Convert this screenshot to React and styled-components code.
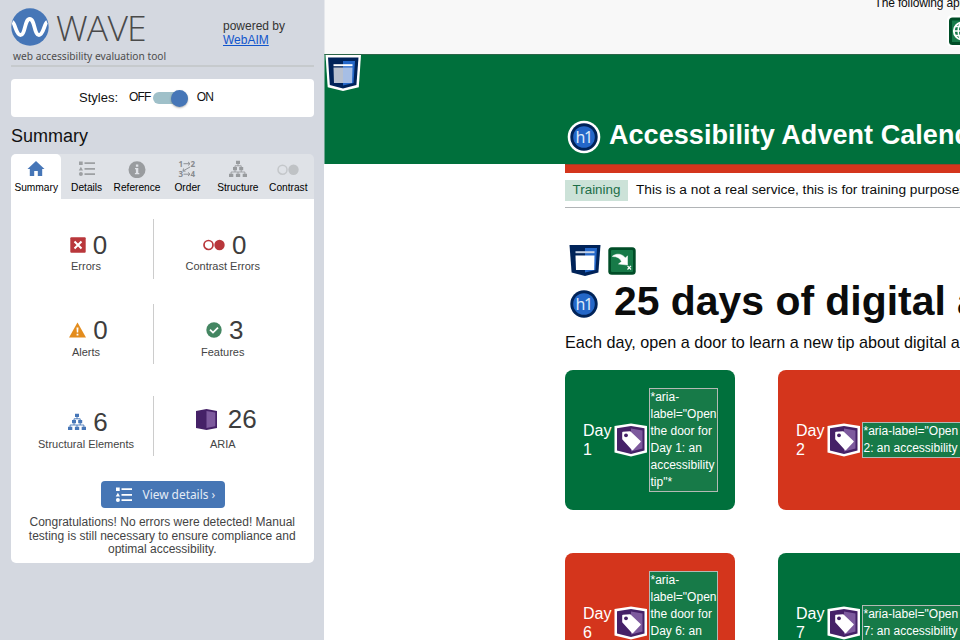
import React from "react";
import styled, { createGlobalStyle } from "styled-components";

const GlobalStyle = createGlobalStyle`
  * { box-sizing: border-box; }
  html, body { margin: 0; padding: 0; overflow: hidden; }
  body { font-family: "Liberation Sans", Arial, sans-serif; background: #fff; color: #0b0c0c; }
  h1, h2, p { margin: 0; font-weight: normal; }
  svg { display: block; flex: none; }
`;

const Page = styled.div`
  display: flex;
  width: 960px;
  height: 640px;
  overflow: hidden;
`;

/* ---------- Sidebar ---------- */
const Sidebar = styled.aside`
  flex: none;
  width: 324px;
  height: 640px;
  padding: 8px 0 0 11px;
  background: #d4d8e0;
`;
const Brand = styled.header`
  display: flex;
  height: 59px;
  border-bottom: 2px solid #c6cacd;
  width: 302.5px;
`;
const BrandLeft = styled.div`
  width: 212px;
`;
const LogoRow = styled.div`
  display: flex;
  height: 38px;
`;
const Wordmark = styled.span`
  margin: -1px 0 0 7px;
  font: 300 35.5px/40px "Open Sans", "Noto Sans", sans-serif;
  letter-spacing: -0.8px;
  color: #4a4a4a;
  white-space: nowrap;
`;
const Tagline = styled.div`
  margin: 3px 0 0 2px;
  font: 10.2px/15px "Noto Sans", sans-serif;
  color: #4c4c4c;
  white-space: nowrap;
`;
const Powered = styled.div`
  padding-top: 12px;
  font-size: 12px;
  line-height: 13.7px;
  color: #333;
  white-space: nowrap;
`;
const Link = styled.a`
  display: block;
  color: #1155cc;
  text-decoration: underline;
`;
const StylesPanel = styled.section`
  display: flex;
  align-items: center;
  width: 302.5px;
  height: 38px;
  margin-top: 12px;
  padding: 0 0 2px 68px;
  background: #fff;
  border-radius: 4px;
  color: #111;
  font-size: 13px;
`;
const SwitchLabel = styled.span`
  font-size: 12px;
  letter-spacing: -0.8px;
  margin-left: ${(p) => p.$gap}px;
`;
const Track = styled.span`
  display: flex;
  align-items: center;
  justify-content: flex-end;
  width: 35px;
  height: 12px;
  margin: 2px 0 0 2.5px;
  border-radius: 6px;
  background: #9fc0c9;
`;
const Knob = styled.span`
  flex: none;
  width: 17px;
  height: 17px;
  border-radius: 50%;
  background: #4676b7;
  box-shadow: 0 1px 2px rgba(0, 0, 0, 0.3);
`;
const PanelTitle = styled.h2`
  margin-top: 7px;
  font-size: 18px;
  line-height: 24px;
  height: 30px;
  color: #111;
`;
const Tabs = styled.nav`
  display: grid;
  grid-template-columns: repeat(6, 1fr);
  width: 302.5px;
  height: 45px;
  background: #dfe2e7;
  border-radius: 5px 5px 0 0;
`;
const Tab = styled.div`
  display: flex;
  flex-direction: column;
  align-items: center;
  padding-top: 6px;
  border-radius: 5px 5px 0 0;
  background: ${(p) => (p.$active ? "#fff" : "transparent")};
  font-size: 10.2px;
  line-height: 12px;
  color: #000;
  white-space: nowrap;
  svg { margin-bottom: 4px; }
`;
const Results = styled.section`
  width: 302.5px;
  height: 364px;
  padding-top: 20px;
  background: #fff;
  border-radius: 0 0 5px 5px;
`;
const ResultRow = styled.div`
  display: grid;
  grid-template-columns: 143px 159.5px;
  height: 60px;
  margin-bottom: ${(p) => p.$after}px;
`;
const Stat = styled.div`
  padding-top: ${(p) => p.$top}px;
  padding-left: ${(p) => p.$indent || 0}px;
  padding-right: ${(p) => p.$outdent || 0}px;
  border-right: ${(p) => (p.$divided ? "1px solid #ccc" : "0")};
`;
const StatValue = styled.div`
  display: flex;
  align-items: center;
  justify-content: center;
  gap: ${(p) => p.$gap}px;
  height: 28px;
  margin-bottom: ${(p) => p.$after}px;
  padding-left: ${(p) => p.$shift}px;
  font-size: 26px;
  line-height: 28px;
  color: #3d3d3d;
`;
const StatLabel = styled.div`
  text-align: center;
  font-size: 11px;
  line-height: 14px;
  color: #444;
  white-space: nowrap;
`;
const DetailsButton = styled.button`
  display: flex;
  align-items: center;
  gap: 10px;
  width: 124px;
  height: 27px;
  margin: 25px 0 0 90px;
  padding: 0 0 0 13.5px;
  border: 0;
  border-radius: 4px;
  background: #4676b5;
  color: #e4ecf6;
  font: 11.9px/20px "Noto Sans", sans-serif;
  white-space: nowrap;
`;
const ButtonText = styled.span`
  margin-top: -1px;
`;
const Message = styled.p`
  margin-top: 8px;
  text-align: center;
  font-size: 12px;
  line-height: 13.7px;
  color: #444;
`;
const MessageLine = styled.span`
  display: block;
  white-space: nowrap;
`;

/* ---------- Evaluated page ---------- */
const Main = styled.main`
  flex: none;
  width: 636px;
  height: 640px;
  overflow: hidden;
  background: #fff;
`;
const Notice = styled.div`
  height: 54px;
  background: #f8f8f8;
  border-left: 1px solid #e6e8ec;
  overflow: hidden;
`;
const NoticeText = styled.p`
  margin: -4px 0 0 549.5px;
  font-size: 12px;
  line-height: 14px;
  height: 14px;
  letter-spacing: -0.15px;
  white-space: nowrap;
`;
const NoticeIcon = styled.div`
  margin: 5px 0 0 622px;
  width: 32px;
`;
const Banner = styled.header`
  display: flex;
  height: 110px;
  background: #00703c;
  border-top: 1px solid #2b6548;
  border-left: 1px solid #6ba58f;
`;
const BannerMarker = styled.div`
  width: 36px;
`;
const BannerTitle = styled.h1`
  display: flex;
  align-items: center;
  gap: 8px;
  margin: 64px 0 0 206px;
  height: 36px;
  font-size: 27px;
  font-weight: bold;
  line-height: 32px;
  letter-spacing: 0.05px;
  color: #fff;
  white-space: nowrap;
`;
const TitleText = styled.span`
  margin-top: -4px;
`;
const Content = styled.div`
  margin-left: 241px;
  width: 640px;
`;
const RedBar = styled.div`
  height: 9px;
  background: #d4351c;
  border-top: 1px solid #9b4026;
`;
const Phase = styled.div`
  display: flex;
  align-items: center;
  height: 35px;
  border-bottom: 1px solid #b1b4b6;
  font-size: 13.7px;
  white-space: nowrap;
`;
const PhaseText = styled.span`
  margin-top: -1px;
`;
const Tag = styled.strong`
  width: 63px;
  height: 21px;
  margin-right: 8px;
  background: #cce2d8;
  color: #1c6e48;
  font-weight: normal;
  font-size: 13.4px;
  line-height: 20px;
  text-align: center;
`;
const MarkerRow = styled.div`
  display: flex;
  gap: 5.5px;
  margin: 34px 0 0 1.5px;
  height: 35px;
`;
const SkipMarker = styled.div`
  padding-top: 5px;
`;
const Heading = styled.h1`
  display: flex;
  align-items: center;
  gap: 15px;
  height: 50px;
  padding-left: 4px;
  font-size: 40.9px;
  font-weight: bold;
  line-height: 50px;
  white-space: nowrap;
  svg { margin-top: 4px; }
`;
const HeadingText = styled.span`
  margin-top: -3px;
`;
const Lead = styled.p`
  margin-top: 5px;
  height: 38px;
  font-size: 16.2px;
  line-height: 20px;
  white-space: nowrap;
`;
const Doors = styled.div`
  display: grid;
  grid-template-columns: 170px 383px;
  grid-auto-rows: 140px;
  gap: 43px;
`;
const Door = styled.article`
  display: flex;
  align-items: center;
  padding: 0 18px;
  border-radius: 8px;
  background: ${(p) => (p.$tone === "green" ? "#00703c" : "#d4351c")};
  color: #fff;
`;
const DayName = styled.div`
  flex: none;
  width: 30px;
  margin-right: 1px;
  font-size: 16px;
  line-height: 19px;
`;
const AriaNote = styled.div`
  flex: none;
  width: ${(p) => p.$width}px;
  margin-left: 1px;
  padding-left: 0.5px;
  border: 1px solid #b3b9b4;
  background: #177a48;
  font-size: 12px;
  line-height: 17px;
`;

/* ---------- Icons ---------- */
const WaveLogo = () => (
  <svg width="38" height="38" viewBox="0 0 38 38">
    <circle cx="19" cy="19" r="18.7" fill="#4676b7" />
    <path d="M1.500 14C4 15 5 27 9.500 27C14.500 27 13.500 11 18.700 11C24 11 23 27 28 27C32.500 27 33.500 15 36 14" fill="none" stroke="#fff" strokeWidth="3.8" />
  </svg>
);
const HomeIcon = () => (
  <svg width="18" height="18" viewBox="0 0 18 18">
    <path d="M9 1L17.500 9H15.200V16H10.800V11H7.200V16H2.800V9H.5Z" fill="#4676b7" />
  </svg>
);
const ListIcon = ({ color = "#9da0a3" }) => (
  <svg width="18" height="18" viewBox="0 0 18 18" fill={color}>
    <path d="M1 1.500h3.700v3.500H1zM2.900 6.700L5 10.600H.7z" />
    <circle cx="2.900" cy="14" r="2" />
    <path d="M6.500 2.300H17v1.800H6.500zM6.500 7.900H17v1.800H6.500zM6.500 13.300H17v1.800H6.500z" />
  </svg>
);
const InfoIcon = () => (
  <svg width="18" height="18" viewBox="0 0 18 18">
    <circle cx="9" cy="9.700" r="8.500" fill="#999c9f" />
    <path d="M7.900 4.600h2.400v2.200H7.900zM7 8h3.300v5h1v1.300H6.900v-1.300h1V9.200H7z" fill="#dfe2e7" />
  </svg>
);
const OrderText = styled.text`
  font: bold 8px "Noto Sans", sans-serif;
`;
const OrderIcon = () => (
  <svg width="22" height="18" viewBox="-2 0 22 18" fill="#888b8f">
    <OrderText x="0.500" y="6.500">1</OrderText>
    <OrderText x="12.500" y="6.500">2</OrderText>
    <OrderText x="0.500" y="17">3</OrderText>
    <OrderText x="12.500" y="17">4</OrderText>
    <path d="M5.500 3.700H12M10 1.900L12 3.700L10 5.500M5.500 14.200H12M10 12.400L12 14.200L10 16M12 7L5 11M5.500 8.500L5 11L7.500 11.200" fill="none" stroke="#8f9296" strokeWidth="1" />
  </svg>
);
const TreeIcon = ({ color = "#989b9e" }) => (
  <svg width="18" height="18" viewBox="0 0 18 18" fill={color}>
    <path d="M7 .8h4v3.200H7zM4 7.100h4v3.200H4zM10.200 7.100h4v3.200h-4zM0 13.800h4.300v3.200H0zM6.900 13.800h4.300v3.200H6.900zM13.700 13.800H18v3.200h-4.300z" />
    <path d="M9 4v2M6 8V5.800h6.200V8M6 10v2M12.200 10v2M2.100 14v-2h13.800v2M9 12v2" fill="none" stroke={color} strokeWidth=".9" />
  </svg>
);
const ContrastTabIcon = () => (
  <svg width="22" height="18" viewBox="0 0 22 18">
    <circle cx="5.500" cy="9.700" r="4.500" fill="none" stroke="#c4c7ca" strokeWidth="1.500" />
    <circle cx="16.500" cy="9.700" r="5.200" fill="#bfc2c5" />
  </svg>
);
const ErrorIcon = () => (
  <svg width="16" height="16" viewBox="0 0 16 16">
    <rect x=".3" y=".3" width="15.400" height="15.400" rx="1" fill="#b9373b" />
    <path d="M4.500 4.500L11.500 11.500M11.500 4.500L4.500 11.500" stroke="#fff" strokeWidth="2" />
  </svg>
);
const ContrastErrorIcon = () => (
  <svg width="22" height="12" viewBox="0 0 22 12">
    <circle cx="5.500" cy="6" r="4.500" fill="none" stroke="#b9373b" strokeWidth="1.700" />
    <circle cx="16.500" cy="6" r="5.200" fill="#b9373b" />
  </svg>
);
const AlertIcon = () => (
  <svg width="17" height="16" viewBox="0 0 17 16">
    <path d="M8.500 .5L17 15.500H0Z" fill="#e38c1d" />
    <path d="M7.500 5.500h2l-.3 5h-1.400zM7.600 11.800h1.800v1.800H7.600z" fill="#fff" />
  </svg>
);
const FeatureIcon = () => (
  <svg width="16" height="16" viewBox="0 0 16 16">
    <circle cx="8" cy="8" r="7.700" fill="#448662" />
    <path d="M4 7.700L7 10.600L12 5.600" fill="none" stroke="#fff" strokeWidth="1.800" />
  </svg>
);
const AriaIcon = () => (
  <svg width="21" height="21" viewBox="0 0 21 21">
    <path d="M0 2L10.500 0L21 2V19L10.500 21L0 19Z" fill="#452167" />
    <path d="M10.500 2L19.300 3.500V17.300L10.500 19Z" fill="#7d5a9d" />
  </svg>
);
const RegionIcon = ({ outlined }) => (
  <svg width="36" height="37" viewBox="0 0 36 37">
    {outlined && <path d="M.5 0H36L33.800 32.200L18 36L2.700 32.200Z" fill="#fff" />}
    <path d={outlined ? "M3 2.500H33.500L31.400 30L18 33.500L4.800 30Z" : "M2.500 3H33.500L31.400 30.600L18 34L4.600 30.600Z"} fill="#002359" />
    <path d="M18 6H30L28.500 28L18 30.500Z" fill="#2467c8" />
    <path d="M8.500 9.200H27.500V11.200H8.500Z" fill={outlined ? "#fff" : "#c6d2e6"} />
    <path d={outlined ? "M8.500 12.500H18V28H9Z" : "M8.500 13.500H27.500L27.200 28H9Z"} fill={outlined ? "#b8c0ce" : "#fff"} />
    {outlined && <path d="M18 12.500H27.500L27 28H18Z" fill="#a6bee5" />}
  </svg>
);
const H1Text = styled.text`
  font: 16px "Noto Sans", sans-serif;
  letter-spacing: -1.3px;
`;
const H1Icon = ({ size, outlined }) => (
  <svg width={size} height={size} viewBox={`${-size / 2} ${-size / 2} ${size} ${size}`}>
    {outlined && <circle r="16.300" fill="#fff" />}
    <circle r="13.700" fill="#002359" />
    <circle r="10.800" fill="#2467c8" />
    <H1Text x="-8.500" y="5.500" fill="#dce8f8">h1</H1Text>
  </svg>
);
const SkipIcon = () => (
  <svg width="28" height="28" viewBox="0 0 28 28">
    <rect x=".3" y=".3" width="27.400" height="27.400" rx="3.500" fill="#004d27" />
    <rect x="3" y="3" width="22" height="22" rx="1" fill="#177a48" />
    <path d="M4.500 9C9 5.800 14.500 7 17.500 11L19.500 8.800V18L10.500 17L13.500 14.500C12 11 9 9.500 4.500 9.500Z" fill="#fff" stroke="#fff" strokeWidth=".5" />
    <path d="M19.500 18.800L23 22.500M23 18.800L19.500 22.500" stroke="#fff" strokeWidth="1.200" />
  </svg>
);
const LangIcon = () => (
  <svg width="32" height="32" viewBox="0 0 32 32">
    <rect width="32" height="32" rx="5" fill="#fff" />
    <rect x="2" y="2.500" width="27.500" height="27.500" rx="3.500" fill="#004d27" />
    <rect x="5" y="5.500" width="21.500" height="21.500" fill="#177a48" />
    <circle cx="15.500" cy="16" r="8.700" fill="none" stroke="#fff" strokeWidth="1.900" />
    <path d="M7 16H24.500M9 11.500H22M9 20.500H22M15.500 7.500V24.500" stroke="#fff" strokeWidth="1.500" />
    <ellipse cx="15.500" cy="16" rx="4.300" ry="8.500" fill="none" stroke="#fff" strokeWidth="1.500" />
  </svg>
);
const AriaTagIcon = () => (
  <svg width="34" height="34" viewBox="0 0 34 34">
    <path d="M.5 3L17 .5L33 3V29.500L17 33.500L.5 29.500Z" fill="#fff" />
    <path d="M3 5.300L17 3L30.500 5.300V27.500L17 31L3 27.500Z" fill="#452167" />
    <path d="M17 5.500L28.500 7.500V25.500L17 28.500Z" fill="#7d5a9d" />
    <path d="M9 9.500L16 9L26 18.500L18.500 26.500L9 16Z" fill="#fff" stroke="#fff" strokeWidth="1.600" strokeLinejoin="round" />
    <circle cx="12" cy="12.300" r="1.900" fill="#452167" />
  </svg>
);

const tabs = [
  ["Summary", <HomeIcon />],
  ["Details", <ListIcon />],
  ["Reference", <InfoIcon />],
  ["Order", <OrderIcon />],
  ["Structure", <TreeIcon />],
  ["Contrast", <ContrastTabIcon />],
];
const doors = [
  { day: 1, tone: "green", width: 68.5 },
  { day: 2, tone: "red", width: 194 },
  { day: 6, tone: "red", width: 68.5 },
  { day: 7, tone: "green", width: 194 },
];

function Result({ icon, value, label, gap = 7, after = 0, shift = 5, ...layout }) {
  return (
    <Stat {...layout}>
      <StatValue $gap={gap} $after={after} $shift={shift}>{icon}<span>{value}</span></StatValue>
      <StatLabel>{label}</StatLabel>
    </Stat>
  );
}

export default function App() {
  return (
    <Page>
      <GlobalStyle />
      <Sidebar>
        <Brand>
          <BrandLeft>
            <LogoRow><WaveLogo /><Wordmark>WAVE</Wordmark></LogoRow>
            <Tagline>web accessibility evaluation tool</Tagline>
          </BrandLeft>
          <Powered>powered by<Link>WebAIM</Link></Powered>
        </Brand>
        <StylesPanel>
          Styles:
          <SwitchLabel $gap={11}>OFF</SwitchLabel>
          <Track><Knob /></Track>
          <SwitchLabel $gap={8.5}>ON</SwitchLabel>
        </StylesPanel>
        <PanelTitle>Summary</PanelTitle>
        <Tabs>
          {tabs.map(([name, icon], i) => (
            <Tab key={name} $active={i === 0}>{icon}{name}</Tab>
          ))}
        </Tabs>
        <Results>
          <ResultRow $after={25}>
            <Result icon={<ErrorIcon />} value="0" label="Errors" $divided $top={12} $indent={8} />
            <Result icon={<ContrastErrorIcon />} value="0" label="Contrast Errors" shift={4} $top={12} $outdent={22} />
          </ResultRow>
          <ResultRow $after={32}>
            <Result icon={<AlertIcon />} value="0" label="Alerts" after={1} $divided $top={12} $indent={8} />
            <Result icon={<FeatureIcon />} value="3" label="Features" shift={4} after={1} $top={12} $outdent={22} />
          </ResultRow>
          <ResultRow $after={0}>
            <Result icon={<TreeIcon color="#4676b7" />} value="6" label="Structural Elements" after={1} shift={4} $divided $top={12} $indent={8} />
            <Result icon={<AriaIcon />} value="26" label="ARIA" gap={11} after={4} shift={7} $top={9} $outdent={22} />
          </ResultRow>
          <DetailsButton><ListIcon color="#fff" /><ButtonText>View details ›</ButtonText></DetailsButton>
          <Message>
            <MessageLine>Congratulations! No errors were detected! Manual</MessageLine>
            <MessageLine>testing is still necessary to ensure compliance and</MessageLine>
            <MessageLine>optimal accessibility.</MessageLine>
          </Message>
        </Results>
      </Sidebar>
      <Main>
        <Notice>
          <NoticeText>The following apps</NoticeText>
          <NoticeIcon><LangIcon /></NoticeIcon>
        </Notice>
        <Banner>
          <BannerMarker><RegionIcon outlined /></BannerMarker>
          <BannerTitle><H1Icon size={34} outlined /><TitleText>Accessibility Advent Calendar</TitleText></BannerTitle>
        </Banner>
        <Content>
          <RedBar />
          <Phase><Tag>Training</Tag><PhaseText>This is a not a real service, this is for training purposes</PhaseText></Phase>
          <MarkerRow><RegionIcon /><SkipMarker><SkipIcon /></SkipMarker></MarkerRow>
          <Heading><H1Icon size={30} /><HeadingText>25 days of digital accessibility</HeadingText></Heading>
          <Lead>Each day, open a door to learn a new tip about digital accessibility</Lead>
          <Doors>
            {doors.map(({ day, tone, width }) => (
              <Door key={day} $tone={tone}>
                <DayName>{`Day ${day}`}</DayName>
                <AriaTagIcon />
                <AriaNote $width={width}>{`*aria-label="Open the door for Day ${day}: an accessibility tip"*`}</AriaNote>
              </Door>
            ))}
          </Doors>
        </Content>
      </Main>
    </Page>
  );
}
